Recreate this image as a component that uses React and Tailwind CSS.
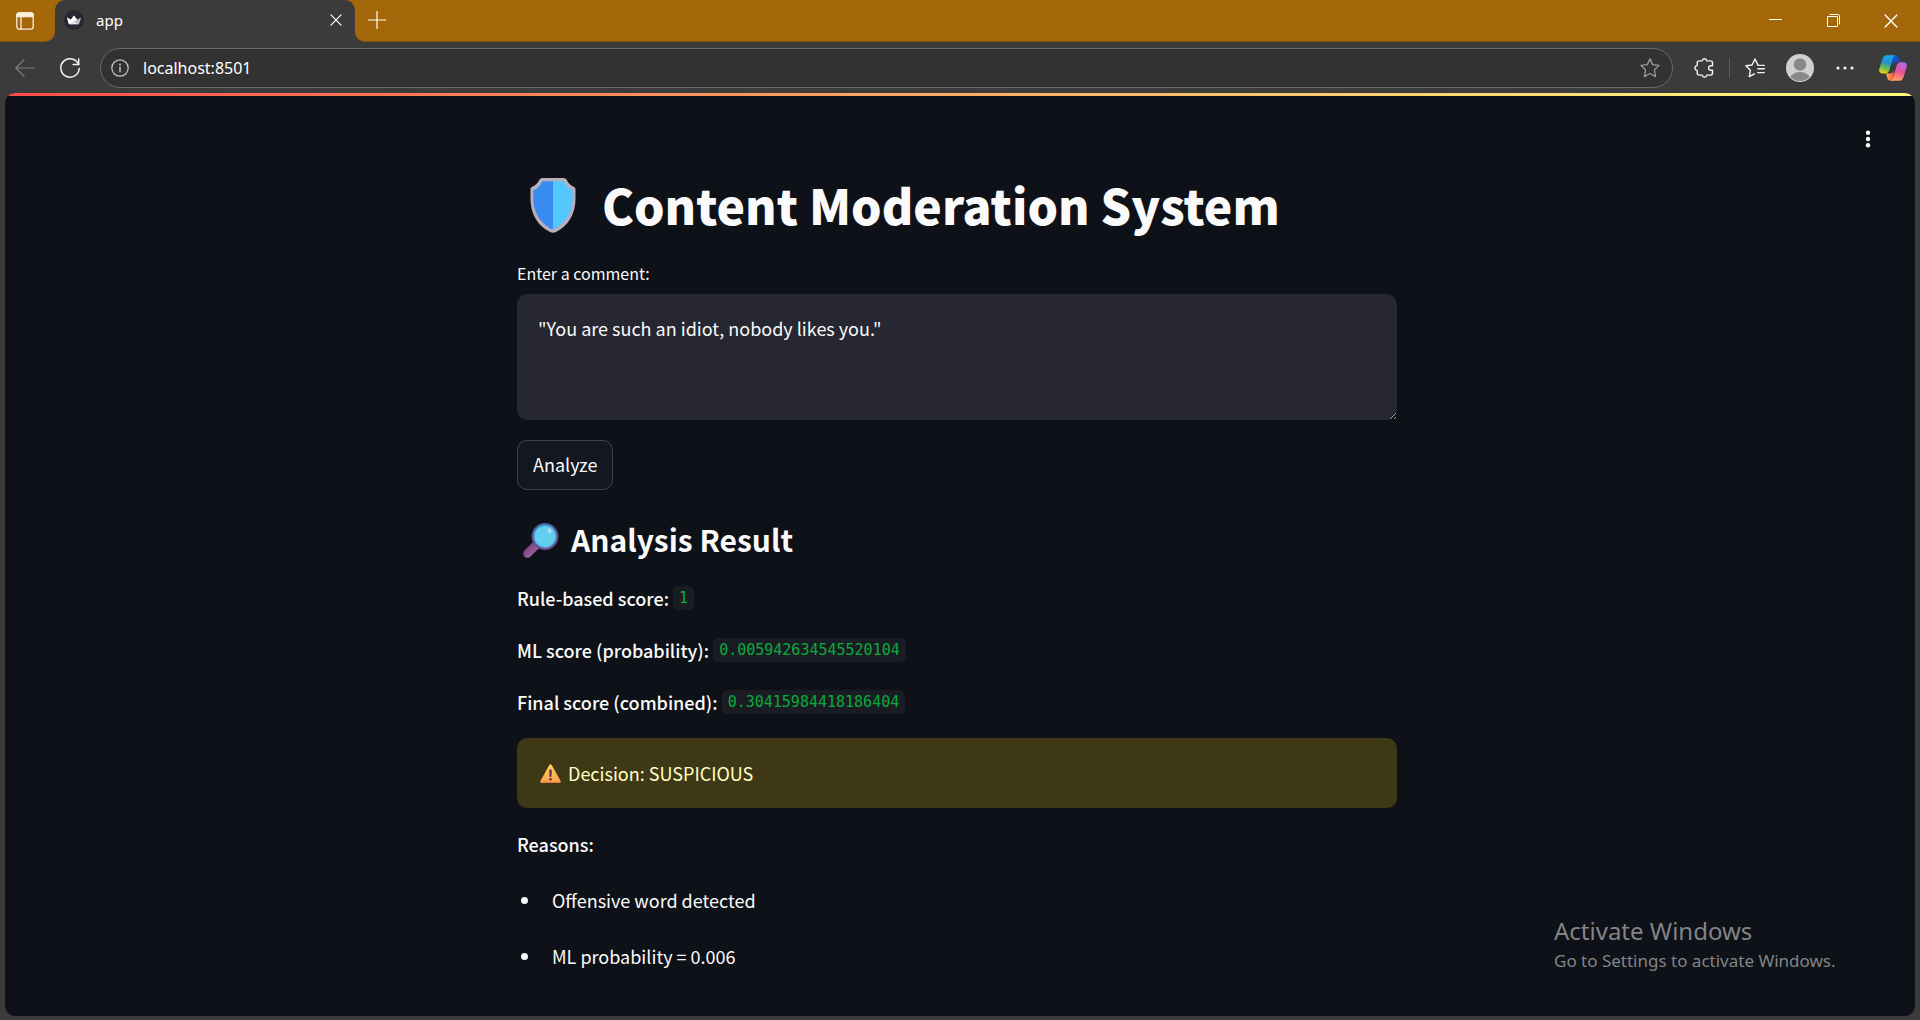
import React from "react";

const line = { fill: "none", stroke: "currentColor", strokeLinecap: "round", strokeLinejoin: "round" };

function TabActionsIcon() {
  return (
    <svg width="18" height="18" viewBox="0 0 18 18" {...line} strokeWidth="1.3">
      <rect x="0.8" y="0.8" width="16.4" height="16.4" rx="2.6" />
      <path d="M1 2.9C1 1.8 1.8 1 2.9 1h12.2c1.1 0 1.9.8 1.9 1.9V4.600H1z" fill="currentColor" />
      <path d="M5 5v12" />
    </svg>
  );
}

function CrownIcon() {
  return (
    <svg width="20" height="20" viewBox="0 0 20 20">
      <circle cx="10" cy="10" r="10" fill="#262730" />
      <path d="M3 7.600l3.800 2.200L10 5.500l3.200 4.300L17 7.600l-1.700 6c-.1.500-.5.700-.9.700H5.600c-.4 0-.8-.2-.9-.7z" fill="#bdbdbf" />
      <path d="M3 7.600l3.800 2.200 3.200 1.500-4.600 2.900c-.4 0-.6-.2-.7-.6zM10 5.500l3.200 4.300L10 11.300l-3.200-1.500z" fill="#fff" />
      <path d="M5.400 14.300L10 11.300l4.600 3z" fill="#e6e6e6" />
    </svg>
  );
}

function CloseIcon({ size }) {
  return (
    <svg width={size} height={size} viewBox="0 0 13 13" {...line} strokeWidth="1.3">
      <path d="M1 1l11 11M12 1L1 12" />
    </svg>
  );
}

function PlusIcon() {
  return (
    <svg width="18" height="18" viewBox="0 0 18 18" {...line} strokeWidth="1.2">
      <path d="M9 .5v17M.5 9h17" />
    </svg>
  );
}

function MinimizeIcon() {
  return (
    <svg width="13" height="13" viewBox="0 0 13 13" {...line}>
      <path d="M.5 5.500h12" />
    </svg>
  );
}

function RestoreIcon() {
  return (
    <svg width="13" height="13" viewBox="0 0 13 13" {...line}>
      <rect x=".5" y="2.500" width="10" height="10" rx=".5" />
      <path d="M3 .5h8.200c.8 0 1.300.5 1.300 1.300V10" />
    </svg>
  );
}

function BackIcon() {
  return (
    <svg width="20" height="18" viewBox="0 0 20 18" {...line} strokeWidth="1.2">
      <path d="M19.500 9H.8M9 .8L.8 9 9 17.200" />
    </svg>
  );
}

function ReloadIcon() {
  return (
    <svg width="20" height="20" viewBox="0 0 20 20" {...line} strokeWidth="1.5">
      <path d="M18.600 6.600A9.200 9.200 0 1 0 19.200 10.500" />
      <path d="M18.700 1v5.600h-5.600" />
    </svg>
  );
}

function InfoIcon() {
  return (
    <svg width="18" height="18" viewBox="0 0 18 18" {...line} strokeWidth="1.2">
      <circle cx="9" cy="9" r="8.200" />
      <path d="M9 8v4.800" strokeWidth="1.400" />
      <circle cx="9" cy="5.400" r=".95" fill="currentColor" stroke="none" />
    </svg>
  );
}

function StarIcon() {
  return (
    <svg width="20" height="20" viewBox="0 0 20 20" {...line} strokeWidth="1.3">
      <path d="M10 .9l2.700 5.700 6.400.8-4.700 4.400 1.200 6.800L10 15.500l-5.600 3.100 1.200-6.800L.9 7.400l6.400-.8z" />
    </svg>
  );
}

function PuzzleIcon() {
  return (
    <svg width="20" height="20" viewBox="0 0 20 20" {...line} strokeWidth="1.4">
      <path d="M8.200 2.900C8.400 1.700 9.200.8 10.500.8s2.100.9 2.300 2.100h3.600c1.200 0 2.100.9 2.100 2.100v2.700h-1.600a2.300 2.300 0 0 0 0 4.600h1.600V15c0 1.200-.9 2.100-2.100 2.100h-3.600c-.2 1.200-1 2.100-2.300 2.100s-2.100-.9-2.300-2.100H5.300c-1.200 0-2.100-.9-2.100-2.100v-2.600C1.900 12.200.9 11.200.9 10s1-2.200 2.300-2.400V5c0-1.200.9-2.100 2.100-2.100z" />
    </svg>
  );
}

function FavoritesIcon() {
  return (
    <svg width="20" height="20" viewBox="0 0 20 20" {...line} strokeWidth="1.400">
      <path d="M19.300 7.400h-6.200L10 1 7 7 .9 7.700l4.500 4.500-1.100 6.300 5.200-2.600M12.800 10.800h6.500M12.800 14.600h6.500" />
    </svg>
  );
}

function AvatarIcon() {
  return (
    <svg width="28" height="28" viewBox="0 0 28 28">
      <defs>
        <clipPath id="avatar-clip">
          <circle cx="14" cy="14" r="13" />
        </clipPath>
      </defs>
      <circle cx="14" cy="14" r="14" fill="#d2d0ce" />
      <circle cx="14" cy="10.500" r="6.200" fill="#8a8886" />
      <ellipse cx="14" cy="26" rx="10.500" ry="8" fill="#8a8886" clipPath="url(#avatar-clip)" />
    </svg>
  );
}

function MoreIcon() {
  return (
    <svg width="18" height="4" viewBox="0 0 18 4" fill="currentColor">
      <circle cx="2" cy="2" r="1.600" />
      <circle cx="9" cy="2" r="1.600" />
      <circle cx="16" cy="2" r="1.600" />
    </svg>
  );
}

function CopilotIcon() {
  return (
    <svg width="28" height="26" viewBox="0 0 28 26">
      <defs>
        <linearGradient id="cp-left" x1="0.6" y1="0" x2="0.3" y2="1">
          <stop offset="0" stopColor="#1aa7ee" />
          <stop offset="0.400" stopColor="#2290d0" />
          <stop offset="0.700" stopColor="#62bd5a" />
          <stop offset="1" stopColor="#f5d20a" />
        </linearGradient>
        <linearGradient id="cp-right" x1="0.600" y1="0" x2="0.400" y2="1">
          <stop offset="0" stopColor="#b06af0" />
          <stop offset="0.500" stopColor="#ee4f9a" />
          <stop offset="1" stopColor="#ffa45c" />
        </linearGradient>
        <linearGradient id="cp-top" x1="0" y1="0" x2="1" y2="1">
          <stop offset="0" stopColor="#0a5ed0" />
          <stop offset="1" stopColor="#2b3fc8" />
        </linearGradient>
        <linearGradient id="cp-bottom" x1="0" y1="0" x2="1" y2="0">
          <stop offset="0" stopColor="#ffb340" />
          <stop offset="1" stopColor="#f04e4e" />
        </linearGradient>
      </defs>
      <path d="M13 .3h3.500c1.800 0 2.700 1.200 3.200 2.700l1.200 4h-3.300c-2.200 0-3.500 1.200-4.100 3z" fill="url(#cp-top)" />
      <path d="M15 25.700h-3.500c-1.800 0-2.700-1.200-3.200-2.700l-1.300-4.500h3.400c2.200 0 3.500-1.200 4.100-3z" fill="url(#cp-bottom)" />
      <path d="M7.500.3h9c-1.500.3-2.200 1.600-2.700 3.200l-3.500 11.700c-.6 2-1.900 3.300-4 3.300H3.600c-2.600 0-4.100-2-3.300-4.600l3-9.700C4.100 1.800 5.400.3 7.500.3z" fill="url(#cp-left)" />
      <path d="M20.500 25.700h-9c1.500-.3 2.200-1.600 2.700-3.200l3.500-12c.6-2 1.900-3.300 4-3.300h2.700c2.600 0 4.100 2 3.300 4.600l-3 9.900c-.8 2.500-2.100 4-4.200 4z" fill="url(#cp-right)" />
    </svg>
  );
}

function KebabIcon() {
  return (
    <svg width="6" height="18" viewBox="0 0 6 18" fill="currentColor">
      <circle cx="3" cy="2.800" r="2.200" />
      <circle cx="3" cy="9" r="2.200" />
      <circle cx="3" cy="15.200" r="2.200" />
    </svg>
  );
}

function ShieldEmoji() {
  return (
    <svg width="46" height="55" viewBox="0 0 46 55" className="shrink-0">
      <path d="M12.500 0h21c1.500 0 2.500.8 3.300 2 1.800 3.500 4 5.700 7 6.800 1.200.5 1.700 1.500 1.700 2.700v9.500c0 15-7.500 27-19.500 33-1.900 1.100-4.100 1.100-6 0C8 48 .5 36 .5 21v-9.500c0-1.200.5-2.200 1.700-2.700 3-1.100 5.200-3.300 7-6.800.8-1.200 1.800-2 3.300-2z" fill="#b9aebc" />
      <path d="M13 3.200h10v48c-1 0-2-.4-3-1C9.800 44.500 3.300 34 3.300 20.500v-8.300c3.800-1.500 6.500-4 8.300-7.800.3-.7.700-1.200 1.400-1.200z" fill="#3a8bef" />
      <path d="M33 3.200H23v48c1 0 2-.4 3-1C36.200 44.500 42.700 34 42.700 20.500v-8.300c-3.800-1.500-6.500-4-8.300-7.800-.3-.7-.7-1.200-1.400-1.200z" fill="#55c7ff" />
    </svg>
  );
}

function MagnifierEmoji() {
  return (
    <svg width="36" height="35" viewBox="0 0 36 35" className="shrink-0">
      <defs>
        <linearGradient id="mag-handle" x1="0" y1="0" x2="1" y2="1">
          <stop offset="0" stopColor="#6f4279" />
          <stop offset="1" stopColor="#a564a5" />
        </linearGradient>
        <linearGradient id="mag-rim" x1="0" y1="0" x2="0" y2="1">
          <stop offset="0" stopColor="#4268a5" />
          <stop offset="1" stopColor="#6f4d87" />
        </linearGradient>
      </defs>
      <path d="M12.500 22.500l-8 8" stroke="url(#mag-handle)" strokeWidth="8.500" strokeLinecap="round" />
      <circle cx="22" cy="13.500" r="12.300" fill="#62cfee" stroke="url(#mag-rim)" strokeWidth="2.200" />
      <circle cx="22" cy="13.500" r="10.700" fill="none" stroke="#48aee5" />
      <ellipse cx="26.500" cy="8" rx="1.900" ry="2.400" fill="#b9dcf8" transform="rotate(-25 26.500 8)" />
    </svg>
  );
}

function WarningEmoji() {
  return (
    <svg width="21" height="19" viewBox="0 0 21 19" className="shrink-0">
      <defs>
        <linearGradient id="warn-fill" x1="0" y1="0" x2="0" y2="1">
          <stop offset="0" stopColor="#ffcf55" />
          <stop offset="1" stopColor="#ffa252" />
        </linearGradient>
      </defs>
      <path d="M9.300 1.100c.6-1 1.800-1 2.400 0l8.900 15.800c.5.900 0 1.900-1 1.900H1.400c-1 0-1.500-1-1-1.900z" fill="url(#warn-fill)" />
      <path d="M.3 17.600c0 .7.500 1.200 1.100 1.200h18.200c.6 0 1.100-.5 1.100-1.200z" fill="#e8853e" />
      <path d="M9.200 6.300c0-1 2.600-1 2.600 0l-.3 6c0 .9-2 .9-2 0z" fill="#4f3b55" />
      <circle cx="10.500" cy="15.300" r="1.300" fill="#4f3b55" />
    </svg>
  );
}

function TitleBar() {
  return (
    <div className="flex h-[42px] font-['Noto_Sans',sans-serif] text-white">
      <div className="flex w-[55px] items-center rounded-br-[10px] border-b border-[#855716] bg-[#a4670a] pl-4">
        <button type="button" aria-label="Tab actions" className="text-[#fbeedd]">
          <TabActionsIcon />
        </button>
      </div>
      <div className="w-[300px] bg-[#a4670a]">
        <div className="flex h-full items-center rounded-t-[10px] bg-[#3b3b3b] px-[9px] pb-[2px]">
          <CrownIcon />
          <span className="ml-3 grow pb-px text-[15px] leading-5">app</span>
          <button type="button" aria-label="Close tab" className="mr-1">
            <CloseIcon size="12" />
          </button>
        </div>
      </div>
      <div className="flex grow items-center rounded-bl-[10px] border-b border-[#855716] bg-[#a4670a]">
        <button type="button" aria-label="New tab" className="ml-[13px] pb-[2px]">
          <PlusIcon />
        </button>
        <div className="ml-auto flex h-full">
          <button type="button" aria-label="Minimize" className="flex w-[58px] items-center justify-center">
            <MinimizeIcon />
          </button>
          <button type="button" aria-label="Restore" className="flex w-[58px] items-center justify-center">
            <RestoreIcon />
          </button>
          <button type="button" aria-label="Close window" className="flex w-[58px] items-center justify-center">
            <CloseIcon size="14" />
          </button>
        </div>
      </div>
    </div>
  );
}

const toolButton = "flex h-10 w-11 items-center justify-center";

function Toolbar() {
  return (
    <div className="flex items-center px-[3px] pt-[6px] pb-[5px] text-[#f2f2f2]">
      <button type="button" aria-label="Back" className={toolButton + " text-[#808080]"}>
        <BackIcon />
      </button>
      <button type="button" aria-label="Refresh" className={toolButton + " ml-px"}>
        <ReloadIcon />
      </button>
      <div className="ml-2 flex h-10 grow items-center rounded-full border border-[#6b6b6b] bg-[#323232] pr-3 pl-[10px]">
        <button type="button" aria-label="Site information" className="text-[#c8c8c8]">
          <InfoIcon />
        </button>
        <input
          type="text"
          aria-label="Address"
          defaultValue="localhost:8501"
          className="ml-[14px] grow bg-transparent pb-px font-['Noto_Sans',sans-serif] text-[16px] leading-6 text-white outline-none"
        />
        <button type="button" aria-label="Add to favorites" className="text-[#9b9b9b]">
          <StarIcon />
        </button>
      </div>
      <div className="ml-[9px] flex items-center gap-px pr-[2px]">
        <button type="button" aria-label="Extensions" className={toolButton}>
          <PuzzleIcon />
        </button>
        <div className="mx-[2px] h-5 w-px bg-[#5c5c5c]" />
        <button type="button" aria-label="Favorites" className={toolButton}>
          <FavoritesIcon />
        </button>
        <button type="button" aria-label="Profile" className={toolButton}>
          <AvatarIcon />
        </button>
        <button type="button" aria-label="Settings and more" className={toolButton}>
          <MoreIcon />
        </button>
        <button type="button" aria-label="Copilot" className={toolButton + " ml-[3px]"}>
          <CopilotIcon />
        </button>
      </div>
    </div>
  );
}

const scores = [
  { label: "Rule-based score:", value: "1" },
  { label: "ML score (probability):", value: "0.005942634545520104" },
  { label: "Final score (combined):", value: "0.30415984418186404" },
];

const reasons = ["Offensive word detected", "ML probability = 0.006"];

function ModerationPage() {
  return (
    <main className="mx-auto flex w-full max-w-[880px] flex-col gap-5 pt-[79px] pb-10 text-[18px] leading-8 text-[#fafafa]">
      <h1 className="flex h-[66px] items-center pl-[13px] text-[48px] leading-[60px] font-black">
        <ShieldEmoji />
        <span className="ml-[26px] pb-[2px]">Content Moderation System</span>
      </h1>
      <div className="flex flex-col pt-[3px]">
        <label htmlFor="comment" className="mb-[9px] text-[16px] leading-6">
          Enter a comment:
        </label>
        <textarea
          id="comment"
          defaultValue={'"You are such an idiot, nobody likes you."'}
          className="h-[126px] resize-y rounded-[10px] bg-[#262730] px-[21px] py-[18px] text-[18px] leading-8 outline-none"
        />
      </div>
      <button type="button" className="h-[50px] self-start rounded-[10px] border border-[#41434a] bg-[#131720] px-[15px] pb-[2px]">
        Analyze
      </button>
      <h2 className="flex h-[52px] items-center pt-2 pl-[6px] text-[30px] leading-10 font-semibold">
        <MagnifierEmoji />
        <span className="ml-3 pb-[2px]">Analysis Result</span>
      </h2>
      {scores.map((score) => (
        <p key={score.label} className="flex items-center gap-1">
          <strong className="font-medium">{score.label}</strong>
          <code className="rounded-[5px] bg-[#1a1c24] px-[6px] font-['DejaVu_Sans_Mono',monospace] text-[15px] leading-6 text-[#09ab3b]">
            {score.value}
          </code>
        </p>
      ))}
      <div role="alert" className="flex h-[70px] items-center rounded-[10px] bg-[#3e3816] pl-[23px] text-[#ffffc2]">
        <WarningEmoji />
        <span className="ml-[7px]">Decision: SUSPICIOUS</span>
      </div>
      <p>
        <strong className="font-medium">Reasons:</strong>
      </p>
      <ul className="mt-1 flex flex-col gap-6">
        {reasons.map((reason) => (
          <li key={reason} className="flex items-center pl-1">
            <span className="mr-6 size-[7px] rounded-full bg-[#fafafa]" />
            {reason}
          </li>
        ))}
      </ul>
    </main>
  );
}

export default function App() {
  return (
    <div className="flex min-h-screen flex-col bg-[#3b3b3b]">
      <TitleBar />
      <Toolbar />
      <div className="relative mx-[5px] mb-1 flex grow flex-col overflow-hidden rounded-[10px] bg-[#0e1117] pr-[6px] font-['Noto_Sans_CJK_SC',sans-serif]">
        <div className="absolute inset-x-0 top-0 h-[3px] bg-linear-to-r from-[#ff4b4b] to-[#fffd80]" />
        <button type="button" aria-label="Main menu" className="absolute top-[37px] right-11 text-[#fafafa]">
          <KebabIcon />
        </button>
        <ModerationPage />
        <div className="absolute right-[76px] bottom-[41px] w-[285px] font-['Noto_Sans',sans-serif] text-[#838486]">
          <div className="text-[24px] leading-8">Activate Windows</div>
          <div className="text-[17px] leading-7">Go to Settings to activate Windows.</div>
        </div>
      </div>
    </div>
  );
}
